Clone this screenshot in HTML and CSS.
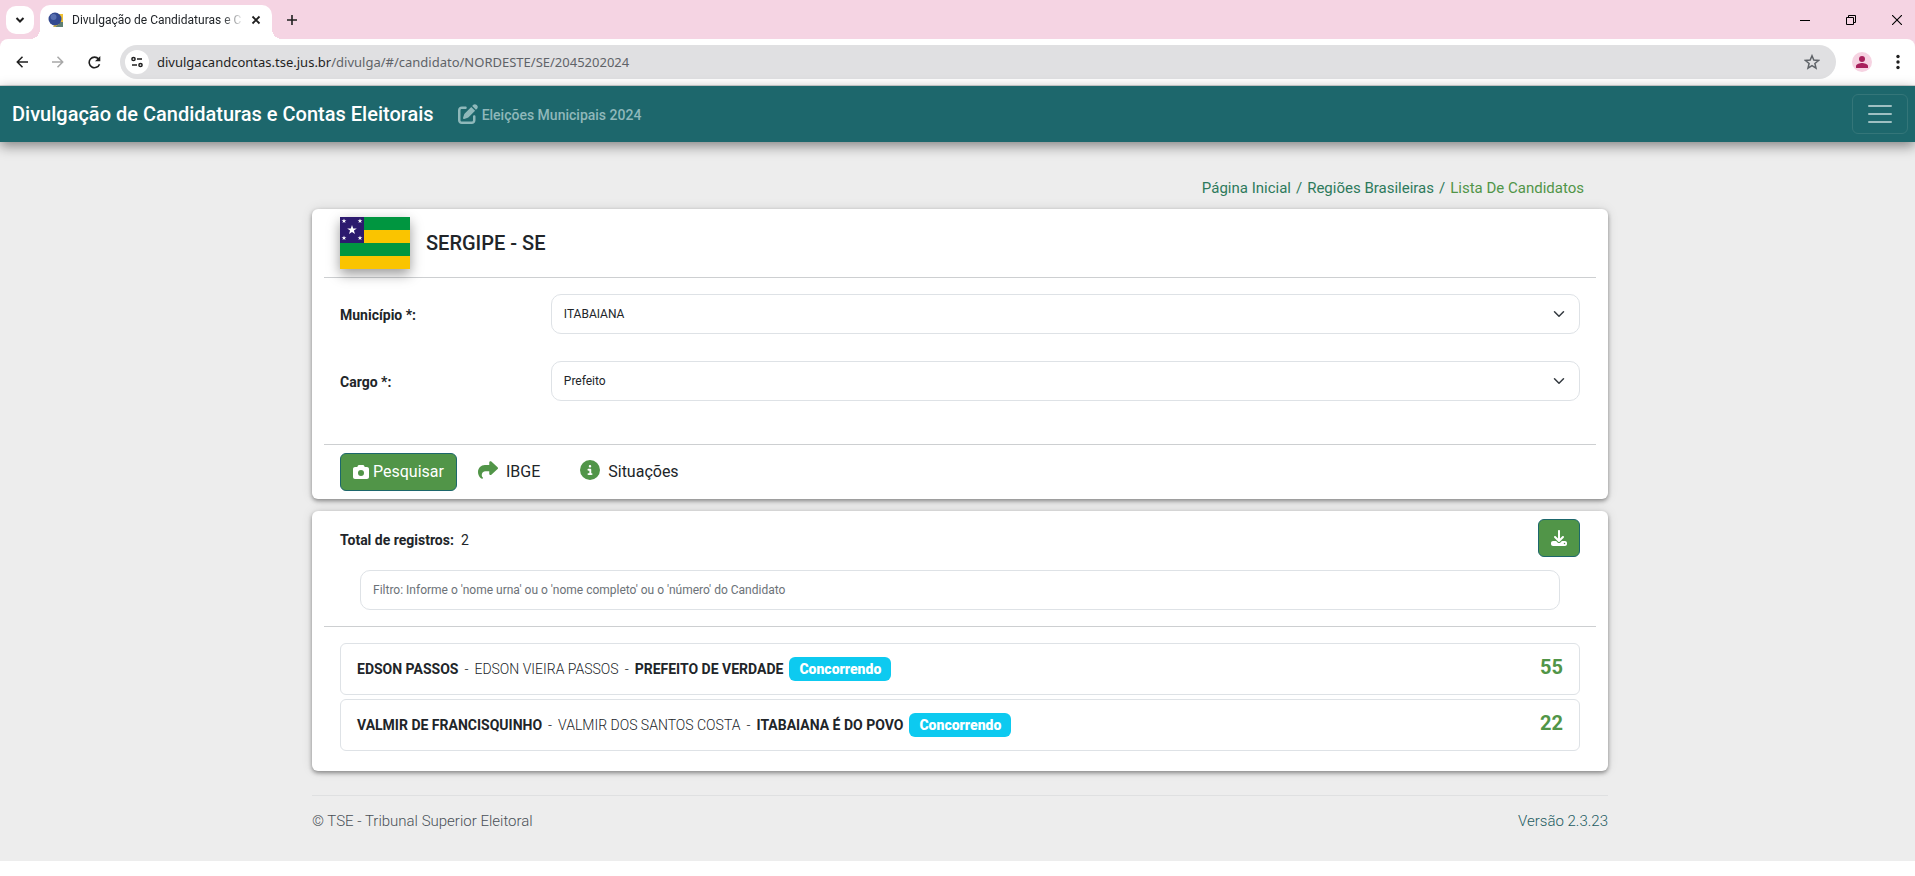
FILE: index.html
```html
<!DOCTYPE html>
<html lang="pt-BR">
<head>
<meta charset="utf-8">
<title>Divulgação de Candidaturas e Contas Eleitorais</title>
<link rel="stylesheet" href="styles.css">
</head>
<body>
<header class="browser">
  <div class="tabstrip">
    <button class="tab-search" aria-label="Pesquisar guias"><svg width="10" height="10" viewBox="0 0 10 10"><path d="M1.500 3 5 6.500 8.500 3" fill="none" stroke="#1f1f1f" stroke-width="2"/></svg></button>
    <div class="tab">
      <svg class="favicon" width="16" height="16" viewBox="0 0 16 16"><path d="M8 2h7v9l-4 3-3-3z" fill="#f1c232"/><path d="M5 15l6-5 4 0v5z" fill="#5f7f74"/><path d="M5 14l5-3 1 1-4 3z" fill="#f1c232"/><circle cx="7" cy="7" r="6.500" fill="#33498f"/><circle cx="5.500" cy="5" r="3" fill="#5970b0"/></svg>
      <span class="tab-title">Divulgação de Candidaturas e C</span>
      <button class="icon-btn" aria-label="Fechar guia"><svg width="10" height="10" viewBox="0 0 10 10"><path d="M1.500 1.500l7 7M8.500 1.500l-7 7" stroke="#1f1f1f" stroke-width="1.800"/></svg></button>
    </div>
    <button class="icon-btn new-tab" aria-label="Nova guia"><svg width="12" height="12" viewBox="0 0 12 12"><path d="M6 1v10M1 6h10" stroke="#1f1f1f" stroke-width="1.600"/></svg></button>
    <div class="window-controls">
      <button class="icon-btn" aria-label="Minimizar"><svg width="10" height="10" viewBox="0 0 10 10"><path d="M0 5.500h10" stroke="#000"/></svg></button>
      <button class="icon-btn" aria-label="Restaurar"><svg width="10" height="10" viewBox="0 0 10 10"><path d="M.5 2.500h7v7h-7zM2.500 2.500v-2h7v7h-2" fill="none" stroke="#000"/></svg></button>
      <button class="icon-btn" aria-label="Fechar"><svg width="10" height="10" viewBox="0 0 10 10"><path d="M0 0l10 10M10 0 0 10" stroke="#000" stroke-width="1.100"/></svg></button>
    </div>
  </div>
  <div class="toolbar">
    <div class="nav-buttons">
      <button class="icon-btn" aria-label="Voltar"><svg width="12" height="12" viewBox="0 0 12 12"><path d="M6.500 .8 1.300 6l5.200 5.200M1.300 6H12" fill="none" stroke="#1f1f1f" stroke-width="1.500"/></svg></button>
      <button class="icon-btn" aria-label="Avançar"><svg width="12" height="12" viewBox="0 0 12 12"><path d="M5.500 .8 10.700 6l-5.200 5.200M10.700 6H0" fill="none" stroke="#a8a8a8" stroke-width="1.500"/></svg></button>
      <button class="icon-btn" aria-label="Recarregar"><svg width="13" height="13" viewBox="0 0 13 13"><path d="M11.500 8.200A5.300 5.300 0 1 1 10.600 3L11 3.500" fill="none" stroke="#1f1f1f" stroke-width="1.600"/><path d="M12.300 0v5.300H7z" fill="#1f1f1f"/></svg></button>
    </div>
    <div class="omnibox">
      <button class="site-info" aria-label="Informações do site"><svg width="12" height="12" viewBox="0 0 12 12" fill="none" stroke="#1f1f1f" stroke-width="1.500"><circle cx="2.500" cy="3" r="1.600"/><path d="M6 3h5M1 9h5"/><circle cx="9.500" cy="9" r="1.600"/></svg></button>
      <div class="url">divulgacandcontas.tse.jus.br<span class="url-path">/divulga/#/candidato/NORDESTE/SE/2045202024</span></div>
      <button class="icon-btn" aria-label="Favoritar"><svg width="16" height="16" viewBox="0 0 16 16"><path d="M8 1.800l1.800 4.300 4.700.4-3.600 3 1.100 4.600L8 11.700l-4 2.400 1.100-4.600-3.600-3 4.700-.4z" fill="none" stroke="#5f6368" stroke-width="1.500"/></svg></button>
    </div>
    <button class="icon-btn profile" aria-label="Perfil"><svg width="20" height="20" viewBox="0 0 20 20"><circle cx="10" cy="10" r="10" fill="#f6d3e2"/><circle cx="10" cy="7" r="3" fill="#a8215c"/><path d="M4 16v-2c0-2 4-3 6-3s6 1 6 3v2z" fill="#a8215c"/></svg></button>
    <button class="icon-btn menu" aria-label="Menu"><svg width="4" height="16" viewBox="0 0 4 16" fill="#1f1f1f"><circle cx="2" cy="2.500" r="1.700"/><circle cx="2" cy="8" r="1.700"/><circle cx="2" cy="13.500" r="1.700"/></svg></button>
  </div>
</header>

<nav class="navbar">
  <a class="brand" href="#">Divulgação de Candidaturas e Contas Eleitorais</a>
  <a class="election" href="#"><svg width="20" height="20" viewBox="0 0 512 512" fill="currentColor"><path d="M471.600 21.700c-21.900-21.900-57.300-21.900-79.200 0L362.300 51.700l97.900 97.900 30.100-30.100c21.900-21.900 21.900-57.300 0-79.200L471.600 21.700zm-299.200 220c-6.100 6.100-10.800 13.600-13.500 21.900l-29.600 88.800c-2.900 8.600-.6 18.100 5.800 24.600s15.900 8.700 24.600 5.800l88.800-29.600c8.200-2.700 15.700-7.400 21.900-13.500L437.700 172.300 339.700 74.300 172.400 241.700zM96 64C43 64 0 107 0 160V416c0 53 43 96 96 96H352c53 0 96-43 96-96V320c0-17.700-14.300-32-32-32s-32 14.300-32 32v96c0 17.700-14.300 32-32 32H96c-17.700 0-32-14.300-32-32V160c0-17.700 14.300-32 32-32h96c17.700 0 32-14.300 32-32s-14.300-32-32-32H96z"/></svg><span>Eleições Municipais 2024</span></a>
  <button class="toggler" aria-label="Abrir menu"><svg width="30" height="30" viewBox="0 0 30 30"><path stroke="#9fc0c2" stroke-linecap="round" stroke-width="2" d="M4 7h22M4 15h22M4 23h22"/></svg></button>
</nav>

<main class="page">
  <div class="container">
    <div class="breadcrumb">
      <a href="#">Página Inicial</a><span>/</span><a href="#">Regiões Brasileiras</a><span>/</span><a class="current" href="#">Lista De Candidatos</a>
    </div>

    <section class="card">
      <div class="card-head">
        <svg class="flag" width="70" height="52" viewBox="0 0 70 52">
          <path fill="#009640" d="M0 0h70v13H0zM0 26h70v13H0z"/><path fill="#fac400" d="M0 13h70v13H0zM0 39h70v13H0z"/><path fill="#2c1a6e" d="M0 0h24v26H0z"/>
          <defs><path id="star" d="M0-5 1.200-1.600H4.800L1.900.5 3 4 0 1.900-3 4-1.900.5-4.800-1.600H-1.200z" fill="#fff"/></defs>
          <use href="#star" transform="translate(12 13)"/><use href="#star" transform="translate(4 4) scale(.5)"/><use href="#star" transform="translate(20 4) scale(.5)"/><use href="#star" transform="translate(4 21) scale(.5)"/><use href="#star" transform="translate(20 21) scale(.5)"/>
        </svg>
        <h1>SERGIPE - SE</h1>
      </div>
      <form class="fields">
        <div class="field">
          <label for="municipio">Município *:</label>
          <div class="select"><select id="municipio"><option>ITABAIANA</option></select><svg width="12" height="12" viewBox="0 0 16 16"><path fill="none" stroke="#343a40" stroke-linecap="round" stroke-linejoin="round" stroke-width="2" d="m2 5 6 6 6-6"/></svg></div>
        </div>
        <div class="field">
          <label for="cargo">Cargo *:</label>
          <div class="select"><select id="cargo"><option>Prefeito</option></select><svg width="12" height="12" viewBox="0 0 16 16"><path fill="none" stroke="#343a40" stroke-linecap="round" stroke-linejoin="round" stroke-width="2" d="m2 5 6 6 6-6"/></svg></div>
        </div>
      </form>
      <div class="actions">
        <button class="btn search"><svg width="16" height="16" viewBox="0 0 512 512" fill="currentColor"><path d="M149.100 64.800L138.700 96H64C28.700 96 0 124.700 0 160V416c0 35.300 28.700 64 64 64H448c35.300 0 64-28.700 64-64V160c0-35.300-28.700-64-64-64H373.300L362.900 64.800C356.400 45.200 338.100 32 317.400 32H194.600c-20.700 0-39 13.200-45.500 32.800zM256 192a96 96 0 1 1 0 192 96 96 0 1 1 0-192z"/></svg><span>Pesquisar</span></button>
        <a class="action" href="#"><svg width="20" height="20" viewBox="0 0 512 512"><path d="M307 34.800c-11.500 5.100-19 16.600-19 29.200v64H176C78.800 128 0 206.800 0 304C0 417.300 81.500 467.900 100.200 478.100c2.500 1.400 5.300 1.900 8.100 1.900c10.900 0 19.700-8.900 19.700-19.700c0-7.500-4.300-14.400-9.800-19.500C108.800 431.900 96 414.400 96 384c0-53 43-96 96-96h96v64c0 12.600 7.400 24.100 19 29.200s25 3 34.400-5.400l160-144c6.700-6.100 10.600-14.700 10.600-23.800s-3.800-17.700-10.600-23.800l-160-144c-9.400-8.500-22.900-10.600-34.400-5.400z"/></svg><span>IBGE</span></a>
        <a class="action" href="#"><svg width="20" height="20" viewBox="0 0 512 512"><path d="M256 512A256 256 0 1 0 256 0a256 256 0 1 0 0 512zM216 336h24V272H216c-13.300 0-24-10.700-24-24s10.700-24 24-24h48c13.300 0 24 10.700 24 24v88h8c13.300 0 24 10.700 24 24s-10.700 24-24 24H216c-13.300 0-24-10.700-24-24s10.700-24 24-24zm40-208a32 32 0 1 1 0 64 32 32 0 1 1 0-64z"/></svg><span>Situações</span></a>
      </div>
    </section>

    <section class="card">
      <div class="results-head">
        <p><strong>Total de registros:</strong><span>2</span></p>
        <button class="btn download" aria-label="Baixar"><svg width="16" height="16" viewBox="0 0 512 512" fill="currentColor"><path d="M288 32c0-17.700-14.300-32-32-32s-32 14.300-32 32V274.700l-73.400-73.400c-12.500-12.500-32.800-12.500-45.300 0s-12.500 32.800 0 45.300l128 128c12.500 12.500 32.800 12.500 45.300 0l128-128c12.500-12.500 12.500-32.800 0-45.300s-32.800-12.500-45.300 0L288 274.700V32zM64 352c-35.300 0-64 28.700-64 64v32c0 35.300 28.700 64 64 64H448c35.300 0 64-28.700 64-64V416c0-35.300-28.700-64-64-64H346.500l-45.300 45.300c-25 25-65.500 25-90.500 0L165.500 352H64zm368 56a24 24 0 1 1 0 48 24 24 0 1 1 0-48z"/></svg></button>
      </div>
      <div class="filter"><input type="text" aria-label="Filtro" placeholder="Filtro: Informe o 'nome urna' ou o 'nome completo' ou o 'número' do Candidato"></div>
      <ul class="candidates">
        <li><strong>EDSON PASSOS</strong><span>-</span><span>EDSON VIEIRA PASSOS</span><span>-</span><strong>PREFEITO DE VERDADE</strong><span class="badge">Concorrendo</span><b class="number">55</b></li>
        <li><strong>VALMIR DE FRANCISQUINHO</strong><span>-</span><span>VALMIR DOS SANTOS COSTA</span><span>-</span><strong>ITABAIANA É DO POVO</strong><span class="badge">Concorrendo</span><b class="number">22</b></li>
      </ul>
    </section>

    <footer class="footer"><span>© TSE - Tribunal Superior Eleitoral</span><a href="#">Versão 2.3.23</a></footer>
  </div>
</main>
</body>
</html>
```
FILE: styles.css
```css
* { box-sizing: border-box; }
body { margin: 0; background: #fff; color: #212529; font: 400 14px/20px Roboto, sans-serif; }
p, h1, ul { margin: 0; padding: 0; }
a { color: inherit; text-decoration: none; }
button, input, select { font: inherit; color: inherit; }
svg { display: block; flex: none; }
strong { font-weight: 700; }

.icon-btn { display: grid; place-items: center; padding: 0; border: 0; background: none; }

/* Browser frame */
.browser { border-bottom: 1px solid #d5d7d8; background: #f5d4e3; font-family: "Noto Sans", sans-serif; }
.tabstrip { display: flex; align-items: center; height: 39px; padding: 0 6px; }
.tab-search { display: grid; place-items: center; width: 28px; height: 28px; padding: 0; border: 0; border-radius: 10px; background: #fff; }
.tab { position: relative; display: flex; align-items: center; align-self: flex-end; width: 232px; height: 34px; margin-left: 6px; padding: 0 11px 5px 8px; border-radius: 10px 10px 0 0; background: #fff; }
.tab::before, .tab::after { content: ""; position: absolute; bottom: 0; width: 10px; height: 10px; }
.tab::before { right: 100%; background: radial-gradient(circle at 0 0, transparent 10px, #fff 10px); }
.tab::after { left: 100%; background: radial-gradient(circle at 100% 0, transparent 10px, #fff 10px); }
.tab-title { flex: 1; margin: 0 8px; white-space: nowrap; font-family: Roboto, sans-serif; font-size: 12px; -webkit-mask-image: linear-gradient(90deg, #000 150px, transparent 172px); mask-image: linear-gradient(90deg, #000 150px, transparent 172px); }
.new-tab { margin-left: 14px; }
.window-controls { display: flex; gap: 36px; margin-left: auto; padding-right: 7px; }
.toolbar { display: flex; align-items: center; height: 46px; padding: 0 15px 0 16px; border-radius: 8px 8px 0 0; background: #fff; }
.nav-buttons { display: flex; gap: 24px; width: 104px; }
.omnibox { display: flex; flex: 1; align-items: center; height: 34px; padding: 0 16px 0 5px; border-radius: 17px; background: #e0e0e2; }
.site-info { display: grid; place-items: center; width: 24px; height: 24px; padding: 0; border: 0; border-radius: 50%; background: #fff; }
.url { flex: 1; margin-left: 8px; color: #1f1f1f; font-size: 13px; }
.url-path { color: #5f6368; }
.profile { margin: 0 24px 0 16px; }

/* Site header */
.navbar { position: relative; display: flex; align-items: center; min-height: 56px; padding: 8px 7px 8px 12px; background: #1d676c; box-shadow: 0 4px 12px rgba(0, 0, 0, .45); }
.brand { color: #fff; font-size: 20px; font-weight: 500; }
.election { display: flex; align-items: center; gap: 4px; margin-left: 24px; color: #8fb8ba; font-weight: 500; }
.election span { padding-top: 2px; }
.toggler { display: grid; place-items: center; width: 56px; height: 40px; margin-left: auto; padding: 0; border: 1px solid #347679; border-radius: 6px; background: none; }

/* Page */
.page { padding: 36px 0 30px 5px; background: #ededed; }
.container { width: 68%; max-width: 1296px; margin: 0 auto; }
.breadcrumb { display: flex; justify-content: flex-end; gap: 5px; padding: 0 24px 11px 0; color: #2d7a5c; font-size: 15px; }
.breadcrumb .current { color: #519548; }

.card { padding: 8px 12px; border-radius: 6px; background: #fff; box-shadow: 0 2px 4px rgba(0, 0, 0, .4), 0 0 12px rgba(0, 0, 0, .1); }
.card + .card { margin-top: 12px; padding-bottom: 20px; }
.card-head { display: flex; align-items: center; gap: 16px; height: 61px; padding: 0 16px 9px; border-bottom: 1px solid #cdcfd1; }
.flag { box-shadow: 0 5px 12px rgba(0, 0, 0, .4); }
.card-head h1 { font-size: 20px; font-weight: 500; }
.fields { display: grid; gap: 27px; padding: 16px 16px 43px; border-bottom: 1px solid #cdcfd1; }
.field { display: grid; grid-template-columns: 1fr 5fr; align-items: center; gap: 5px; }
.field label { padding-top: 2px; font-weight: 700; }
.select { display: grid; align-items: center; }
.select > * { grid-area: 1 / 1; }
.select svg { justify-self: end; margin-right: 15px; pointer-events: none; }
.select select, .filter input { width: 100%; height: 40px; padding: 0 12px; border: 1px solid #dee2e6; border-radius: 10px; background: #fff; appearance: none; font-size: 12px; }
.actions { display: flex; align-items: center; padding: 8px 16px 0; font-size: 16px; }
.btn { display: flex; align-items: center; justify-content: center; gap: 4px; height: 38px; padding: 0 12px; border: 1px solid #1d676c; border-radius: 6px; background: #519548; color: #fff; }
.action { display: flex; align-items: center; gap: 8px; margin-left: 21px; }
.action + .action { margin-left: 40px; }
.action svg { margin-bottom: 4px; fill: #519548; }

.results-head { display: flex; align-items: center; justify-content: space-between; padding: 0 16px; }
.results-head p { display: flex; gap: 7px; padding-top: 4px; }
.filter { padding: 13px 36px 16px; border-bottom: 1px solid #cdcfd1; }
.filter input::placeholder { color: #6c7278; opacity: 1; }
.candidates { display: grid; gap: 4px; padding: 16px 16px 0; list-style: none; }
.candidates li { display: flex; align-items: center; gap: 6px; height: 52px; padding: 0 16px; border: 1px solid #dee2e6; border-radius: 6px; font-weight: 300; }
.candidates .badge { padding: 2px 10px; border-radius: 6px; background: #0dcaf0; color: #fff; font-weight: 900; }
.number { margin-left: auto; padding-bottom: 4px; color: #519548; font-size: 20px; font-weight: 700; }

.footer { display: flex; justify-content: space-between; margin-top: 24px; padding-top: 15px; border-top: 1px solid #dfe0e1; color: #495057; font-size: 15px; font-weight: 300; }
.footer a { color: #1d5c61; }
```
